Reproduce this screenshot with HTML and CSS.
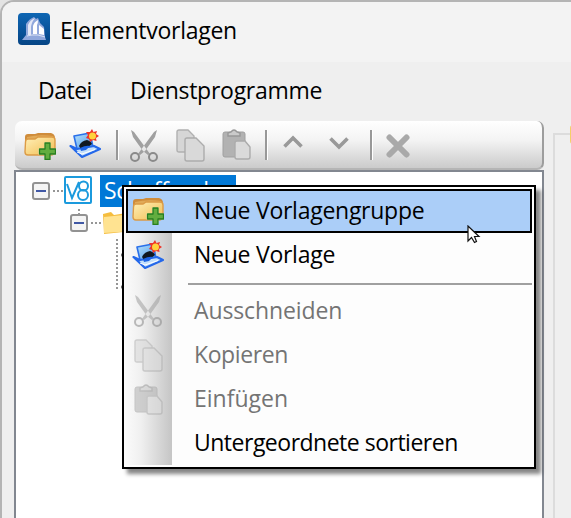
FILE: index.html
```
<!DOCTYPE html>
<html lang="de">
<head>
  <meta charset="UTF-8">
  <title>Elementvorlagen</title>
  <link rel="stylesheet" href="styles.css">
</head>
<body>
  <!-- shared icons -->
  <svg class="defs" width="0" height="0">
    <defs>
      <linearGradient id="gFolder" x1="0" y1="0" x2="1" y2="1">
        <stop offset="0" stop-color="#fff0b8"/><stop offset="1" stop-color="#f2bc50"/>
      </linearGradient>
      <linearGradient id="gScreen" x1="0" y1="0" x2="1" y2="1">
        <stop offset="0" stop-color="#b9e2fb"/><stop offset="1" stop-color="#4a98ea"/>
      </linearGradient>
      <linearGradient id="gLogo" x1="0" y1="0" x2="0" y2="1">
        <stop offset="0" stop-color="#0e66b4"/><stop offset="1" stop-color="#064585"/>
      </linearGradient>
    </defs>
    <symbol id="folder-add" viewBox="0 0 32 28">
      <path d="M1 5Q1 2 4 2L11 2L14 1L27 1Q31 2 31 6V10H1Z" fill="#cf8c3b"/>
      <path d="M3 5Q15 2 29 4V10H3Z" fill="#e1aa58"/>
      <path d="M1.500 10Q1.500 7 4 7H11L14 5H28Q31 5 31 8V20Q30 23 27 23H4Q1 23 1 20Z" fill="url(#gFolder)" stroke="#dc9b45" stroke-width="1.400"/>
      <path d="M20.500 10.500h6v6h6v6h-6v6h-6v-6h-6v-6h6z" fill="#f9f4d8" opacity=".8"/>
      <path d="M21 11h5v6h5.500v5H26v5.500h-5V22h-5.500v-5H21z" fill="#62ad3f" stroke="#267e1f" stroke-width="1.300" stroke-linejoin="round"/>
    </symbol>
    <symbol id="template-new" viewBox="0 0 32 30">
      <path d="M5 7L21 4L24 18L8 20Z" fill="url(#gScreen)" stroke="#2a70ea" stroke-width="1.600" stroke-linejoin="round"/>
      <path d="M1.500 17L8 20L25 17L31 20L13 28Z" fill="#c4e0fb" stroke="#2468ea" stroke-width="2.200" stroke-linejoin="round"/>
      <path d="M10 17Q12 12 18 11Q22 12 23 15L19 18L12 20Z" fill="#101820"/>
      <path d="M11 19Q17 16 21 17L17 21L12 22Z" fill="#1c63e4"/>
      <path d="M8 23L13 25L26 20.500" fill="none" stroke="#fff" stroke-width="1"/>
      <path d="M23 0L24.500 3L28 2L27 5L30 7L27 9L27.500 12L24 11L21 13L20 10L17 9L19 6L17 3L21 3Z" fill="#ee3429"/>
      <circle cx="23.500" cy="7" r="3.500" fill="#ffd33c"/>
    </symbol>
    <symbol id="cut" viewBox="0 0 28 32">
      <path d="M1 0L4 2L15 17L20 24L18 25L13 21L3 7Z M27 0L24 2L13 17L8 24L10 25L15 21L25 7Z" fill="#a0a0a0"/>
      <circle cx="5" cy="27" r="4" fill="none" stroke="#8a8a8a" stroke-width="2"/>
      <circle cx="23" cy="27" r="4" fill="none" stroke="#8a8a8a" stroke-width="2"/>
    </symbol>
    <symbol id="copy" viewBox="0 0 29 33">
      <path d="M3 1H12L18 7V23H3Q1 23 1 21V3Q1 1 3 1Z" fill="#d6d6d6" stroke="#b0b0b0" stroke-width="1.400"/>
      <path d="M11 9H20L28 17V30Q28 32 26 32H11Q9 32 9 30V11Q9 9 11 9Z" fill="#d9d9d9" stroke="#acacac" stroke-width="1.400"/>
    </symbol>
    <symbol id="paste" viewBox="0 0 29 31">
      <rect x="1" y="3" width="22" height="25" rx="2" fill="#b2b2b2" stroke="#a0a0a0"/>
      <path d="M6 7V4L9 3Q12-1 15 3L18 4V7Z" fill="#cacaca" stroke="#989898" stroke-width="1.400"/>
      <path d="M15 12H23L28 18V28Q28 30 26 30H15Q13 30 13 28V14Q13 12 15 12Z" fill="#dadada" stroke="#acacac" stroke-width="1.400"/>
    </symbol>
  </svg>

  <div class="window">
    <header class="titlebar">
      <svg class="logo" viewBox="0 0 32 32">
        <rect width="32" height="32" rx="4" fill="url(#gLogo)"/>
        <path d="M4 27L8 22V11Q11 6 16 4L18 6L20 5L22 10L26 14L27 24L28 27Z" fill="#91a8dc"/>
        <path d="M10 22V12Q12 7 17 5Q13 10 13 15V22Z" fill="#e4e8f7"/>
        <path d="M15 21V13Q16 9 20 7Q20 10 19 12V21Z" fill="#fff"/>
        <path d="M21 21V12L26 16V22Z" fill="#fff"/>
        <path d="M9 23L14 22L20 22L27 24" fill="none" stroke="#dbe2f4"/>
      </svg>
      <h1 class="title">Elementvorlagen</h1>
    </header>

    <nav class="menubar">
      <span class="m-file">Datei</span>
      <span class="m-tools">Dienstprogramme</span>
    </nav>

    <div class="content">
      <div class="left">
        <div class="toolbar">
          <svg class="i-folder"><use href="#folder-add"/></svg>
          <svg class="i-template"><use href="#template-new"/></svg>
          <i class="divider"></i>
          <svg class="i-cut"><use href="#cut"/></svg>
          <svg class="i-copy"><use href="#copy"/></svg>
          <svg class="i-paste"><use href="#paste"/></svg>
          <i class="divider"></i>
          <svg class="i-arrow up" viewBox="0 0 20 14"><path d="M1.500 11.500L10 3L18.500 11.500" fill="none" stroke="#999" stroke-width="3.600"/></svg>
          <svg class="i-arrow down" viewBox="0 0 20 14"><path d="M1.500 2.500L10 11L18.500 2.500" fill="none" stroke="#999" stroke-width="3.600"/></svg>
          <i class="divider"></i>
          <svg class="i-delete" viewBox="0 0 24 24"><path d="M3.500 3.500L20.500 20.500M20.500 3.500L3.500 20.500" stroke="#a9a9a9" stroke-width="6" stroke-linecap="round"/></svg>
        </div>

        <div class="tree">
          <div class="node root">
            <span class="toggle"></span>
            <i class="dots"></i>
            <svg class="v8" viewBox="0 0 28 28">
              <rect x="1" y="1" width="26" height="26" rx="1" fill="#fff" stroke="#1b9add" stroke-width="2"/>
              <path d="M3 8L8 22L15 6" fill="none" stroke="#1b9add" stroke-width="2"/>
              <circle cx="19.500" cy="10" r="4.500" fill="none" stroke="#1b9add" stroke-width="2"/>
              <circle cx="19" cy="19" r="5" fill="none" stroke="#1b9add" stroke-width="2"/>
            </svg>
            <span class="label">Schaffender</span>
          </div>
          <div class="node child">
            <span class="toggle"></span>
            <i class="dots"></i>
            <svg class="folder" viewBox="0 0 32 24">
              <path d="M1 3L9 1L12 4L31 1V20L2 23Z" fill="#f5bd3e"/>
              <path d="M2 6L12 5L31 3V20L2 22Z" fill="#ffe391"/>
            </svg>
          </div>
          <div class="branch"><i></i><i></i></div>
        </div>
      </div>

      <aside class="group"><span class="group-icon"></span></aside>
    </div>
  </div>

  <div class="context-menu">
    <div class="item active"><span class="ico"><svg class="i-folder"><use href="#folder-add"/></svg></span><span class="t1">Neue Vorlagengruppe</span></div>
    <div class="item"><span class="ico"><svg class="i-template"><use href="#template-new"/></svg></span><span class="t2">Neue Vorlage</span></div>
    <div class="separator"></div>
    <div class="item disabled"><span class="ico"><svg class="i-cut"><use href="#cut"/></svg></span><span class="t3">Ausschneiden</span></div>
    <div class="item disabled"><span class="ico"><svg class="i-copy"><use href="#copy"/></svg></span><span class="t4">Kopieren</span></div>
    <div class="item disabled"><span class="ico"><svg class="i-paste"><use href="#paste"/></svg></span><span class="t5">Einfügen</span></div>
    <div class="item"><span class="ico"></span><span class="t6">Untergeordnete sortieren</span></div>
  </div>

  <svg class="cursor" viewBox="0 0 14 19">
    <path d="M1 1V16L4.500 12.500L7.500 17.500L9.500 16.500L7.500 11.500H12Z" fill="#fff" stroke="#111" stroke-width="1.200"/>
  </svg>
</body>
</html>
```
FILE: styles.css
```
* {
  box-sizing: border-box;
}
body {
  margin: 0;
  width: 571px;
  height: 518px;
  overflow: hidden;
  position: relative;
  background: #e3e3e3;
  color: #000;
  font: 23px/30px "Open Sans", "Noto Sans", sans-serif;
  letter-spacing: -.26px;
}
svg {
  display: block;
  flex: none;
}
.defs {
  position: absolute;
}
.window {
  width: 590px;
  height: 530px;
  border: 2px solid #b4b4b4;
  border-radius: 14px 0 0 0;
  background: #efefef;
  overflow: hidden;
}
.titlebar {
  display: flex;
  align-items: center;
  height: 60px;
  padding: 0 0 6px 16px;
  background: #f3f3f3;
}
.logo {
  width: 32px;
  height: 32px;
}
.title {
  margin: 2px 0 0 10px;
  font-size: 23px;
  font-weight: 400;
}
.menubar {
  display: flex;
  gap: 38px;
  height: 59px;
  padding: 13px 0 0 36px;
}
.m-file {
  width: 54px;
  letter-spacing: -.5px;
}

.content {
  display: flex;
}
.left {
  width: 531px;
  padding-left: 12px;
}
.toolbar {
  display: flex;
  align-items: center;
  width: 529px;
  height: 49px;
  margin-left: 1px;
  border-right: 2px solid #9d9d9d;
  border-bottom: 2px solid #b5b5b5;
  border-radius: 7px;
  background: linear-gradient(#fff, #f4f4f4 40%, #cbcbcb);
}
.divider {
  width: 3px;
  height: 30px;
  border-left: 2px solid #989898;
  border-right: 1px solid #fff;
  flex: none;
}
.i-folder { width: 32px; height: 28px; }
.i-template { width: 32px; height: 30px; }
.i-cut { width: 28px; height: 32px; }
.i-copy { width: 29px; height: 33px; }
.i-paste { width: 29px; height: 31px; }
.i-arrow { width: 20px; height: 14px; }
.i-delete { width: 24px; height: 24px; }
.toolbar .i-folder { margin: 3px 0 0 9px; }
.toolbar .i-template { margin: -1px 15px 0 13px; }
.toolbar .i-cut { margin: 2px 0 0 11px; }
.toolbar .i-copy { margin: 2px 0 0 18px; }
.toolbar .i-paste { margin: -1px 14px 0 17px; }
.toolbar .up { margin: -5px 0 0 15px; }
.toolbar .down { margin: -3px 21px 0 26px; }
.toolbar .i-delete { margin: 2px 0 0 13px; }

.tree {
  width: 530px;
  height: 360px;
  padding: 5px 0 0 16px;
  border: 2px solid #828790;
  background: #fff;
}
.node {
  display: flex;
  align-items: center;
  height: 32px;
}
.toggle {
  display: flex;
  align-items: center;
  justify-content: center;
  width: 18px;
  height: 18px;
  border: 2px solid #929292;
  border-radius: 3px;
  background: #f4f4f4;
}
.toggle::before {
  content: "";
  width: 10px;
  height: 2px;
  background: #4058a5;
}
.dots {
  width: 10px;
  margin-left: 3px;
  border-top: 2px dotted #969696;
}
.v8 {
  width: 28px;
  height: 28px;
  margin: -2px 0 0 1px;
}
.label {
  width: 136px;
  height: 32px;
  margin-left: 8px;
  padding-left: 4px;
  background: #0078d7;
  color: #fff;
}
.root {
  margin-top: -2px;
}
.child {
  position: relative;
  margin-left: 38px;
}
.child::before {
  content: "";
  position: absolute;
  top: 2px;
  left: 8px;
  height: 6px;
  border-left: 2px dotted #969696;
}
.folder {
  width: 32px;
  height: 24px;
  margin-left: 1px;
}
.branch {
  display: flex;
  flex-direction: column;
  justify-content: space-between;
  align-items: flex-end;
  width: 8px;
  height: 50px;
  margin: 0 0 0 84px;
  padding-top: 14px;
  border-left: 2px dotted #969696;
}
.branch i {
  width: 3px;
  height: 4px;
  border-radius: 2px 0 0 2px;
  background: #555;
}

.group {
  position: relative;
  width: 40px;
  height: 400px;
  margin: 12px 0 0 20px;
  border-top: 2px solid #dcdcdc;
  border-left: 2px solid #dcdcdc;
}
.group-icon {
  position: absolute;
  top: -10px;
  left: 15px;
  width: 20px;
  height: 19px;
  border-radius: 3px;
  background: #f5cf67;
}

.context-menu {
  position: absolute;
  top: 185px;
  left: 122px;
  width: 414px;
  height: 284px;
  padding: 2px;
  border: 2px solid #000;
  background: linear-gradient(90deg, #fcfcfc, #f0f0f0 35%, #c5c5c5) 0 2px / 48px 276px no-repeat, #fdfdfd;
  box-shadow: 5px 5px 4px rgba(0, 0, 0, .48);
}
.item {
  display: flex;
  align-items: center;
  width: 406px;
  height: 44px;
}
.item span:last-child {
  margin-top: -2px;
}
.ico {
  display: flex;
  justify-content: center;
  width: 44px;
  margin-right: 24px;
}
.active {
  border: 2px solid #000;
  background: #abcef8;
}
.active .ico {
  width: 40px;
  margin-right: 26px;
}
.disabled {
  color: #747474;
}
.disabled svg {
  opacity: .55;
}
.t3 { letter-spacing: -.12px; }
.t4 { letter-spacing: -.4px; }
.t5 { letter-spacing: 0; }
.t6 { letter-spacing: -.5px; }
.separator {
  height: 2px;
  margin: 6px 0 4px 62px;
  background: #a0a0a0;
}

.cursor {
  position: absolute;
  top: 225px;
  left: 467px;
  width: 14px;
  height: 19px;
}
```
